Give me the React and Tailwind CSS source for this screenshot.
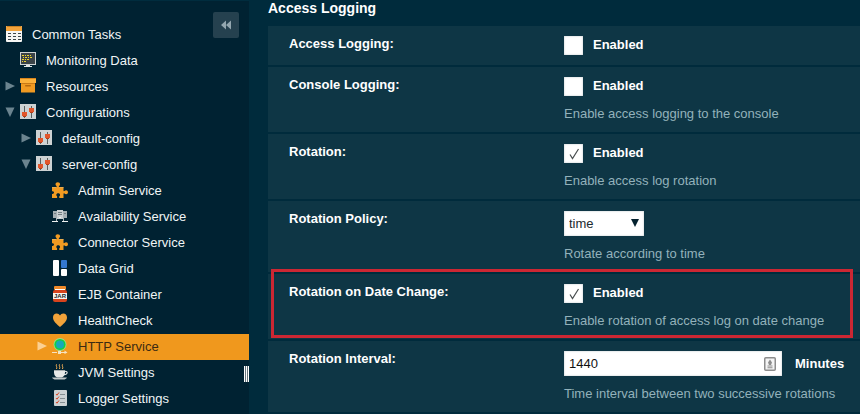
import React from 'react';

const TasksIcon = () => (
  <svg viewBox="0 0 16 16" className="size-4" aria-hidden="true">
    <rect width="16" height="16" rx="1" fill="#f6f6f4" />
    <path d="M1 0h14a1 1 0 0 1 1 1v4H0V1a1 1 0 0 1 1-1z" fill="#f3a43c" />
    <path d="M1 0h14v1H1z" fill="#c98224" />
    <path d="M2 7h3v1H2zM7 7h3v1H7zM12 7h3v1h-3zM2 10h3v1H2zM7 10h3v1H7zM12 10h3v1h-3zM2 13h3v1H2zM7 13h3v1H7zM12 13h3v1h-3z" fill="#3d474b" />
  </svg>
);

const MonitorIcon = () => (
  <svg viewBox="0 0 16 16" className="size-4" aria-hidden="true">
    <rect x="0.5" y="0.5" width="15" height="12" fill="#3b4347" stroke="#cfd4d4" />
    <path d="M2 3h2v1H2zM5 3h1v1H5zM7 3h2v1H7zM10 3h1v1h-1zM3 5h1v1H3zM5 5h2v1H5zM8 5h1v1H8zM10 5h2v1h-2zM2 7h2v1H2zM5 7h1v1H5zM7 7h2v1H7zM2 9h1v1H2zM4 9h2v1H4z" fill="#f0d62c" />
    <path d="M6 13h4v1h2v1H4v-1h2z" fill="#e4e7e6" />
  </svg>
);

const BoxIcon = () => (
  <svg viewBox="0 0 16 16" className="size-4" aria-hidden="true">
    <path d="M1 5h14v9.5H1z" fill="#f09a22" />
    <path d="M0 0h16v5H0z" fill="#fbb13b" />
    <path d="M0 0h16v1H0z" fill="#d8841a" />
    <path d="M1 5h14v1H1z" fill="#c97a16" />
    <rect x="5" y="7" width="6" height="1.5" rx="0.7" fill="#b4690f" />
  </svg>
);

const ConfigIcon = () => (
  <svg viewBox="0 0 16 16" className="size-4" aria-hidden="true">
    <rect width="16" height="15" fill="#cdd2d3" />
    <path d="M4 2h1v12H4zM11 2h1v12h-1z" fill="#59605f" />
    <path d="M2 8h5v4H2zM9 4h5v4H9z" fill="#e2562a" />
    <path d="M3 12h3v1H3zM10 8h3v1h-3z" fill="#b53d17" />
  </svg>
);

const PuzzleIcon = () => (
  <svg viewBox="0 0 16 16" className="size-4" aria-hidden="true">
    <path
      d="M0 5.2h4.3c.5 0 .6-.5.3-.9C4.1 3.7 3.5 3.1 3.5 2.3 3.5 1 4.5.2 5.8.2S8.1 1 8.1 2.3c0 .8-.6 1.4-1.1 2-.3.4-.2.9.3.9h4.2v3.4c0 .5.5.7.9.4.5-.4 1-.8 1.7-.8 1.100 0 1.900.9 1.900 2s-.8 2-1.900 2c-.7 0-1.200-.4-1.700-.8-.4-.3-.9-.1-.9.400V16H7.300v-1.700c.5-.3.800-.8.800-1.400 0-1-.8-1.700-1.900-1.700s-1.900.7-1.900 1.700c0 .6.300 1.100.8 1.400V16H0v-4.100c1 .3 2-.3 2-1.300S1 9 0 9.300z"
      fill="#f29b22"
    />
    <path d="M0 5.2h4.3v.9H0zM7.3 5.2h4.2v.9H7.3z" fill="#fbbd5e" />
  </svg>
);

const ClusterIcon = () => (
  <svg viewBox="0 0 16 16" className="size-4" aria-hidden="true">
    <path d="M1 3h4v7H1zM11 3h4v7h-4z" fill="#a5aeb2" />
    <path d="M5 2h6v9H5z" fill="#c9ced0" />
    <path d="M6 4h4v1H6zM6 6h4v1H6zM2 5h2v1H2zM12 5h2v1h-2z" fill="#717c81" />
    <path d="M4.5 10v4M11.5 10v4" stroke="#aeb7ba" />
    <path d="M0 13h6v1H0zM10 13h6v1h-6zM7 9h2v1H7z" fill="#eef1f1" />
  </svg>
);

const GridIcon = () => (
  <svg viewBox="0 0 16 16" className="size-4" aria-hidden="true">
    <rect x="1" width="6" height="16" rx="1" fill="#fff" />
    <rect x="9" width="6" height="8" rx="1" fill="#3478cf" />
    <rect x="9" y="9" width="6" height="7" rx="1" fill="#fff" />
  </svg>
);

const JarIcon = () => (
  <svg viewBox="0 0 16 16" className="size-4" aria-hidden="true">
    <rect x="2" y="0" width="12" height="4" rx="1" fill="#ef8a2a" />
    <path d="M3 3h10v1H3z" fill="#fff" />
    <rect x="1" y="4" width="14" height="12" rx="2" fill="#d8431d" />
    <path d="M1 7h14v6H1z" fill="#f7f3ee" />
    <text x="8" y="12.2" textAnchor="middle" fontSize="6" fontWeight="700" fill="#1c2226">
      JAR
    </text>
  </svg>
);

const HeartIcon = () => (
  <svg viewBox="0 0 16 16" className="size-4" aria-hidden="true">
    <path d="M8 15C5 12.3 1 9.5 1 5.5 1 3.2 2.6 1.6 4.7 1.6c1.4 0 2.6.7 3.3 2 .7-1.3 1.9-2 3.3-2C13.4 1.6 15 3.2 15 5.5c0 4-4 6.8-7 9.5z" fill="#f2a33a" />
  </svg>
);

const HttpIcon = () => (
  <svg viewBox="0 0 16 16" className="size-4" aria-hidden="true">
    <circle cx="8" cy="6.5" r="6.5" fill="#9fdc8c" />
    <circle cx="8" cy="6.5" r="5.6" fill="#17cf3f" />
    <circle cx="8" cy="6.5" r="4" fill="#16a9b8" />
    <path d="M0 14.5h5M9 14.5h5" stroke="#f6e3c0" />
    <path d="M6 13h3v3H6zM12.500 12.500l3 2-3 1.500z" fill="#f6e3c0" />
  </svg>
);

const CupIcon = () => (
  <svg viewBox="0 0 16 16" className="size-4" aria-hidden="true">
    <path d="M4.5.3c-1 1.200 1 2.500 0 4.700M7.500.3c-1 1.200 1 2.500 0 4.700M10.500.3c-1 1.200 1 2.500 0 4.700" fill="none" stroke="#f0ae55" />
    <path d="M2 6h11v2.5c0 3-1.8 4.5-3.5 5h-4C3.800 13 2 11.500 2 8.500z" fill="#e6e8e7" />
    <path d="M2 6h11v1H2z" fill="#a7aeb0" />
    <path d="M13 7.500c3-.7 3 3-1 3.200" fill="none" stroke="#dfe2e2" strokeWidth="1.2" />
    <path d="M0 13.500h15c-1 1.500-2 2-3.500 2h-8c-1.500 0-2.500-.5-3.500-2z" fill="#c3c9ca" />
  </svg>
);

const LoggerIcon = () => (
  <svg viewBox="0 0 16 16" className="size-4" aria-hidden="true">
    <rect x="2" y="0" width="13" height="16" rx="1" fill="#ccd1d3" />
    <path d="M4 4l1 1.200 2-2.700M4 8l1 1.200 2-2.700M4 12l1 1.200 2-2.700" fill="none" stroke="#d8492a" />
    <path d="M8 4.500h5M8 8.500h5M8 12.500h5" stroke="#858e92" />
  </svg>
);

const Arrow = ({ open, active }) => (
  <svg viewBox="0 0 10 10" className={active ? 'size-[10px] text-[#fbd093]' : 'size-[10px] text-[#6b848f]'} aria-hidden="true">
    <path d={open ? 'M0.5 0.5h9L5 10z' : 'M0.5 0.5v9L10 5z'} fill="currentColor" />
  </svg>
);

// left padding per tree depth
const indents = ['pl-[6px]', 'pl-[5px]', 'pl-[21px]', 'pl-[37px]'];

const treeItems = [
  { label: 'Common Tasks', icon: TasksIcon, depth: 0 },
  { label: 'Monitoring Data', icon: MonitorIcon, depth: 1 },
  { label: 'Resources', icon: BoxIcon, depth: 1, arrow: 'closed' },
  { label: 'Configurations', icon: ConfigIcon, depth: 1, arrow: 'open' },
  { label: 'default-config', icon: ConfigIcon, depth: 2, arrow: 'closed' },
  { label: 'server-config', icon: ConfigIcon, depth: 2, arrow: 'open' },
  { label: 'Admin Service', icon: PuzzleIcon, depth: 3 },
  { label: 'Availability Service', icon: ClusterIcon, depth: 3 },
  { label: 'Connector Service', icon: PuzzleIcon, depth: 3 },
  { label: 'Data Grid', icon: GridIcon, depth: 3 },
  { label: 'EJB Container', icon: JarIcon, depth: 3 },
  { label: 'HealthCheck', icon: HeartIcon, depth: 3 },
  { label: 'HTTP Service', icon: HttpIcon, depth: 3, arrow: 'closed', active: true },
  { label: 'JVM Settings', icon: CupIcon, depth: 3 },
  { label: 'Logger Settings', icon: LoggerIcon, depth: 3 },
];

const TreeItem = ({ label, icon: Icon, depth, arrow, active }) => (
  <li className={active ? 'bg-[#f0981d] text-[#3b2a12]' : 'text-[#f0f5f6]'}>
    <a href="#" className={`flex h-[26px] items-center ${indents[depth]}`}>
      <span className="flex items-center pb-0.5">
        {depth > 0 && (
          <span className="mr-[5px] w-[10px] shrink-0">
            {arrow && <Arrow open={arrow === 'open'} active={active} />}
          </span>
        )}
        <Icon />
      </span>
      <span className="ml-[10px] whitespace-nowrap">{label}</span>
    </a>
  </li>
);

const Sidebar = () => (
  <aside className="relative w-[249px] shrink-0 border-t border-[#002c3e] bg-[#002232] pt-[21px]">
    <nav aria-label="Tree">
      <ul>
        {treeItems.map((item) => (
          <TreeItem key={item.label} {...item} />
        ))}
      </ul>
    </nav>
    <button
      type="button"
      aria-label="Collapse sidebar"
      className="absolute top-[11px] right-[10px] flex size-[26px] items-center justify-center rounded-xs bg-[#25414f]"
    >
      <svg viewBox="0 0 10 10" className="size-[10px]" aria-hidden="true">
        <path d="M5 0.5v9L0 5zM10 0.5v9L5 5z" fill="#94a7b0" />
      </svg>
    </button>
    {/* Resize handle */}
    <div className="absolute top-[365px] right-0 flex h-4 w-[5px] justify-between bg-[#66757c]">
      <span className="w-px bg-white" />
      <span className="w-px bg-white" />
      <span className="w-px bg-white" />
    </div>
  </aside>
);

const SettingRow = ({ label, htmlFor, hint, highlight, children }) => (
  <div className="relative flex bg-[#0e3645] py-[10px]">
    <label htmlFor={htmlFor} className="w-1/2 shrink-0 pl-[21px] leading-4 font-bold">
      {label}
    </label>
    <div className="min-w-0 flex-1">
      {children}
      {hint && <p className="mt-[10px] leading-4 whitespace-nowrap text-[#93b2bb]">{hint}</p>}
    </div>
    {highlight && (
      <div className="pointer-events-none absolute -top-[5px] right-[7px] bottom-px left-[3px] border-3 border-[#cc2733]" />
    )}
  </div>
);

const EnabledCheckbox = ({ id, defaultChecked }) => (
  <div className="flex items-start gap-[10px]">
    <span className="relative size-[19px]">
      <input
        id={id}
        type="checkbox"
        defaultChecked={defaultChecked}
        className="peer block size-[19px] appearance-none bg-white shadow-[inset_0_0_2px_#b4bec2]"
      />
      <svg viewBox="0 0 19 19" className="pointer-events-none absolute inset-0 hidden size-[19px] peer-checked:block" aria-hidden="true">
        <path d="M6 10.5l2.5 4 6-9.500" fill="none" stroke="#4a4f51" strokeWidth="1.2" />
      </svg>
    </span>
    <label htmlFor={id} className="leading-[17px] font-bold">
      Enabled
    </label>
  </div>
);

const App = () => {
  return (
    <div className="flex min-h-screen bg-[#002b3c] font-['Liberation_Sans',Arial,sans-serif] text-[13px] text-white">
      <Sidebar />
      <main className="min-w-0 flex-1 pl-[19px]">
        <h2 className="mb-[10px] text-sm leading-4 font-bold">Access Logging</h2>
        <form className="flex flex-col gap-0.5">
          <SettingRow label="Access Logging:" htmlFor="access-logging">
            <EnabledCheckbox id="access-logging" />
          </SettingRow>
          <SettingRow label="Console Logging:" htmlFor="console-logging" hint="Enable access logging to the console">
            <EnabledCheckbox id="console-logging" />
          </SettingRow>
          <SettingRow label="Rotation:" htmlFor="rotation" hint="Enable access log rotation">
            <EnabledCheckbox id="rotation" defaultChecked />
          </SettingRow>
          <SettingRow label="Rotation Policy:" htmlFor="rotation-policy" hint="Rotate according to time">
            <div className="relative w-20">
              <select
                id="rotation-policy"
                defaultValue="time"
                className="block h-[25px] w-full appearance-none bg-white pl-[5px] text-[#1c2b30] shadow-[inset_0_0_2px_#b4bec2]"
              >
                <option value="time">time</option>
                <option value="size">size</option>
              </select>
              <svg viewBox="0 0 8 8" className="pointer-events-none absolute top-2 right-[5px] size-2" aria-hidden="true">
                <path d="M0 0h8L4 8z" fill="#04222f" />
              </svg>
            </div>
          </SettingRow>
          <SettingRow
            label="Rotation on Date Change:"
            htmlFor="rotation-date"
            hint="Enable rotation of access log on date change"
            highlight
          >
            <EnabledCheckbox id="rotation-date" defaultChecked />
          </SettingRow>
          <SettingRow
            label="Rotation Interval:"
            htmlFor="rotation-interval"
            hint="Time interval between two successive rotations"
          >
            <div className="flex items-center gap-[13px]">
              <div className="relative w-[218px]">
                <input
                  id="rotation-interval"
                  type="text"
                  defaultValue="1440"
                  className="block h-[25px] w-full bg-white pl-[5px] text-[#111] shadow-[inset_0_0_2px_#b4bec2]"
                />
                <svg viewBox="0 0 12 14" className="pointer-events-none absolute top-[6px] right-[6px] h-[14px] w-3" aria-hidden="true">
                  <rect x="0.75" y="0.75" width="10.5" height="12.5" rx="1" fill="#f4f4f4" stroke="#8c8c8c" strokeWidth="1.5" />
                  <path d="M6 2.5L8 5.5 7 8H5L4 5.5zM3.5 8.5h5v1h-5zM3.500 10.300h5v1h-5z" fill="#8c8c8c" />
                </svg>
              </div>
              <span className="font-bold">Minutes</span>
            </div>
          </SettingRow>
        </form>
      </main>
    </div>
  );
};

export default App;
